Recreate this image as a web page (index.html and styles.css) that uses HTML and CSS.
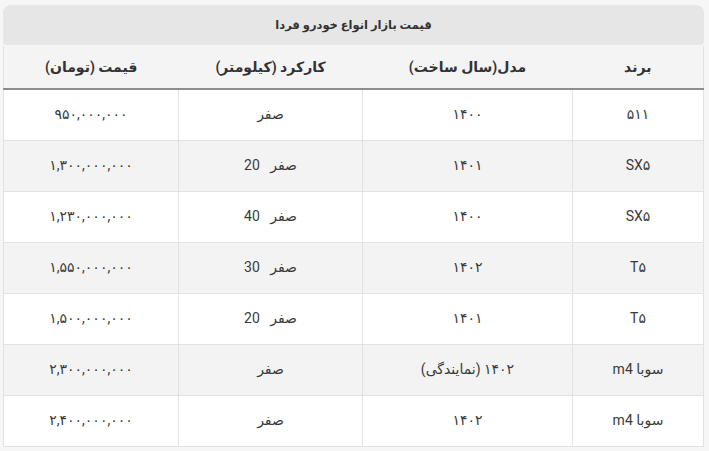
FILE: index.html
```html
<!DOCTYPE html>
<html lang="fa" dir="rtl">
<head>
<meta charset="utf-8">
<title>قیمت بازار انواع خودرو فردا</title>
<link rel="stylesheet" href="styles.css">
</head>
<body>
<div class="wrap">
  <div class="caption">قیمت بازار انواع خودرو فردا</div>
  <table class="prices">
    <colgroup>
      <col class="c-brand"><col class="c-model"><col class="c-km"><col class="c-price">
    </colgroup>
    <thead>
      <tr><th>برند</th><th>مدل(سال ساخت)</th><th>کارکرد (کیلومتر)</th><th>قیمت (تومان)</th></tr>
    </thead>
    <tbody>
      <tr><td>۵۱۱</td><td>۱۴۰۰</td><td>صفر</td><td>۹۵۰,۰۰۰,۰۰۰</td></tr>
      <tr><td>SX۵</td><td>۱۴۰۱</td><td>صفر &nbsp;&nbsp;20</td><td>۱,۳۰۰,۰۰۰,۰۰۰</td></tr>
      <tr><td>SX۵</td><td>۱۴۰۰</td><td>صفر &nbsp;&nbsp;40</td><td>۱,۲۳۰,۰۰۰,۰۰۰</td></tr>
      <tr><td>T۵</td><td>۱۴۰۲</td><td>صفر &nbsp;&nbsp;30</td><td>۱,۵۵۰,۰۰۰,۰۰۰</td></tr>
      <tr><td>T۵</td><td>۱۴۰۱</td><td>صفر &nbsp;&nbsp;20</td><td>۱,۵۰۰,۰۰۰,۰۰۰</td></tr>
      <tr><td>سوبا m4</td><td>۱۴۰۲ (نمایندگی)</td><td>صفر</td><td>۲,۳۰۰,۰۰۰,۰۰۰</td></tr>
      <tr><td>سوبا m4</td><td>۱۴۰۲</td><td>صفر</td><td>۲,۴۰۰,۰۰۰,۰۰۰</td></tr>
    </tbody>
  </table>
</div>
</body>
</html>
```
FILE: styles.css
```css
html, body {
  margin: 0;
  padding: 0;
  background: #f6f6f6;
}
body {
  font-family: Roboto, "DejaVu Sans", sans-serif;
  color: #3a3a3a;
}
.wrap {
  padding: 5px 5px 0 3px;
  width: 701px;
}
.caption {
  height: 40px;
  background: #e6e6e6;
  border-radius: 8px 8px 4px 4px;
  display: flex;
  align-items: center;
  justify-content: center;
  font-size: 11.5px;
  font-weight: bold;
  color: #333;
}
.prices {
  margin: 1px 0 0 1px;
  width: 700px;
  border-collapse: collapse;
  table-layout: fixed;
  font-size: 14px;
}
.c-brand { width: 131px; }
.c-model { width: 210px; }
.c-km { width: 184px; }
.c-price { width: 175px; }
.prices th {
  height: 42px;
  padding: 0;
  background: #f4f4f4;
  border-bottom: 2px solid #8e8e8e;
  font-weight: bold;
  color: #333;
  text-align: center;
}
.prices th:first-child { border-right: 1px solid #e2e2e2; }
.prices th:last-child { border-left: 1px solid #e2e2e2; }
.prices td {
  height: 51px;
  padding: 0 0 2px 0;
  box-sizing: border-box;
  border: 1px solid #e2e2e2;
  text-align: center;
  background: #fff;
}
.prices tbody tr:nth-child(even) td {
  background: #f3f3f3;
}
```
